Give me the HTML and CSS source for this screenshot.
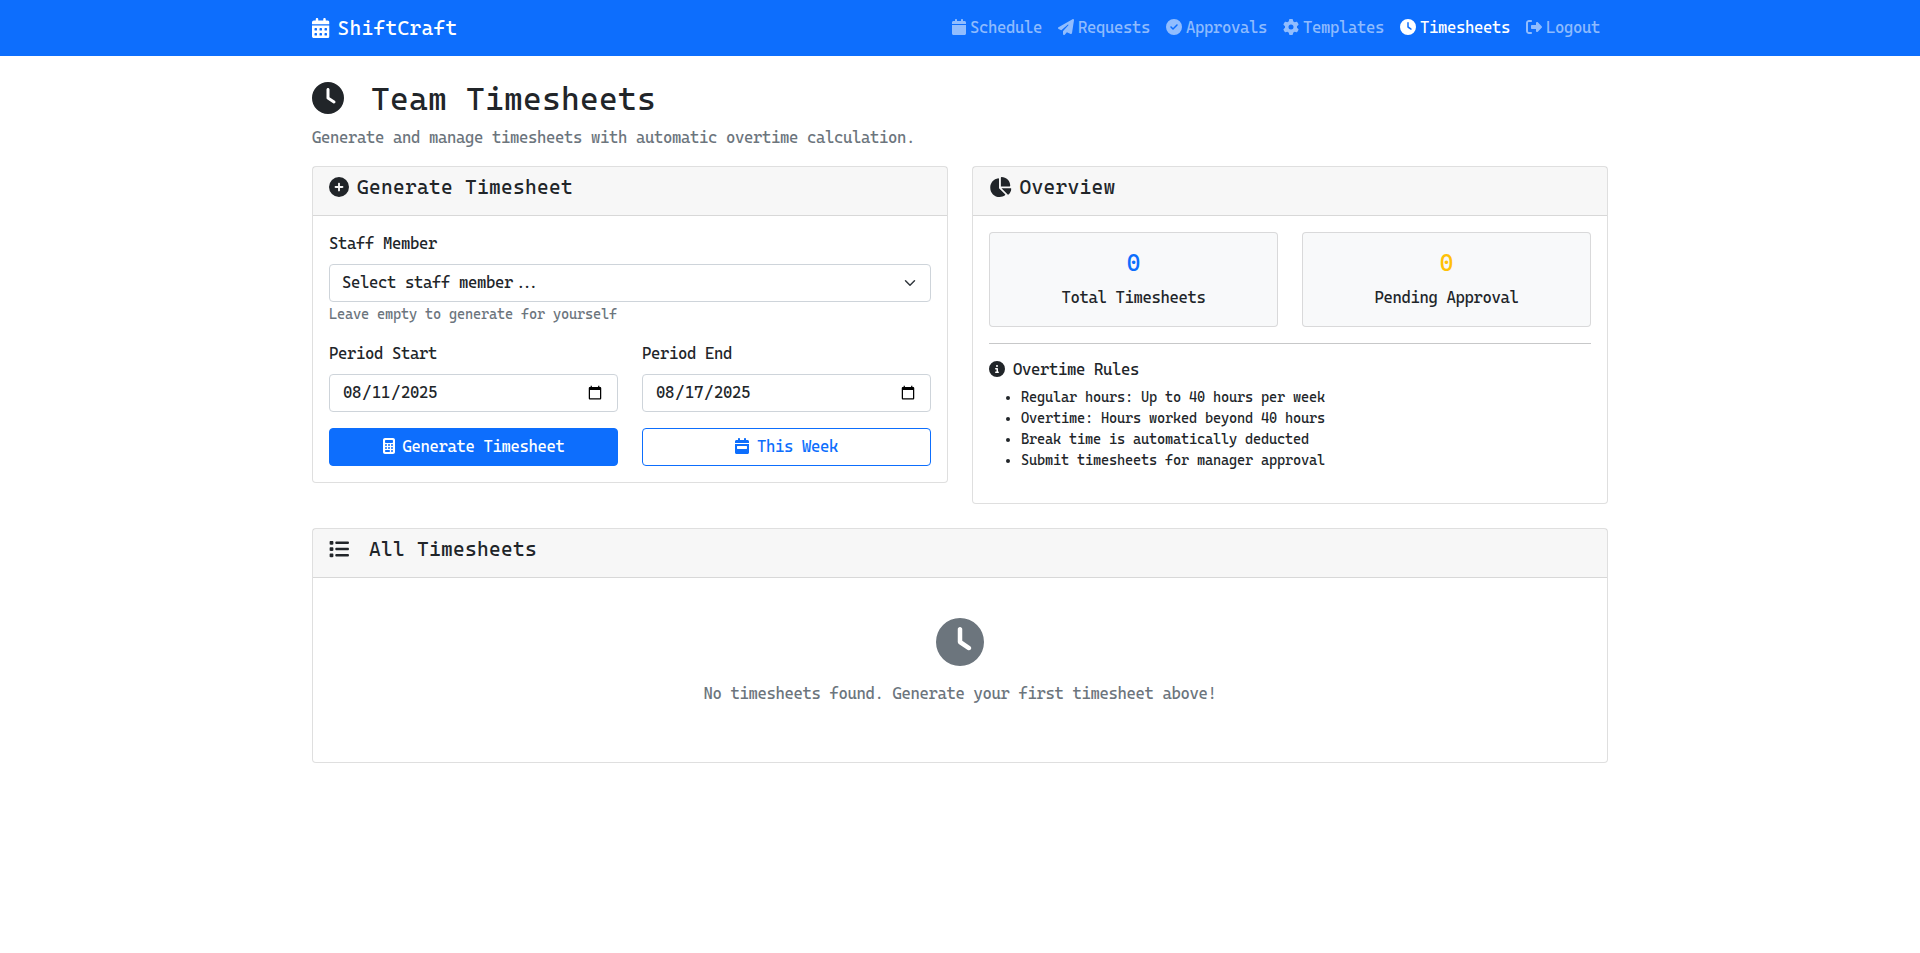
FILE: index.html
```html
<!DOCTYPE html>
<html lang="en">
<head>
    <meta charset="utf-8">
    <title>Team Timesheets - ShiftCraft</title>
    <link rel="stylesheet" href="styles.css">
</head>
<body>
    <svg class="sprite" xmlns="http://www.w3.org/2000/svg">
        <symbol id="i-calendar-days" viewBox="0 0 448 512"><path d="M128 0c17.7 0 32 14.3 32 32V64H288V32c0-17.7 14.3-32 32-32s32 14.3 32 32V64h48c26.5 0 48 21.5 48 48v48H0V112C0 85.5 21.5 64 48 64H96V32c0-17.7 14.3-32 32-32zM0 192H448V464c0 26.5-21.5 48-48 48H48c-26.5 0-48-21.5-48-48V192zm64 80v32c0 8.8 7.2 16 16 16h32c8.8 0 16-7.2 16-16V272c0-8.8-7.2-16-16-16H80c-8.8 0-16 7.2-16 16zm128 0v32c0 8.8 7.2 16 16 16h32c8.8 0 16-7.2 16-16V272c0-8.8-7.2-16-16-16H208c-8.8 0-16 7.2-16 16zm144-16c-8.8 0-16 7.2-16 16v32c0 8.8 7.2 16 16 16h32c8.8 0 16-7.2 16-16V272c0-8.8-7.2-16-16-16H336zM64 400v32c0 8.8 7.2 16 16 16h32c8.8 0 16-7.2 16-16V400c0-8.8-7.2-16-16-16H80c-8.8 0-16 7.2-16 16zm144-16c-8.8 0-16 7.2-16 16v32c0 8.8 7.2 16 16 16h32c8.8 0 16-7.2 16-16V400c0-8.8-7.2-16-16-16H208zm112 16v32c0 8.8 7.2 16 16 16h32c8.8 0 16-7.2 16-16V400c0-8.8-7.2-16-16-16H336c-8.8 0-16 7.2-16 16z"/></symbol>
        <symbol id="i-calendar" viewBox="0 0 448 512"><path d="M96 32V64H48C21.5 64 0 85.5 0 112v48H448V112c0-26.5-21.5-48-48-48H352V32c0-17.7-14.3-32-32-32s-32 14.3-32 32V64H160V32c0-17.7-14.3-32-32-32S96 14.3 96 32zM448 192H0V464c0 26.5 21.5 48 48 48H400c26.5 0 48-21.5 48-48V192z"/></symbol>
        <symbol id="i-plane" viewBox="0 0 512 512"><path d="M498.1 5.6c10.1 7 15.4 19.1 13.5 31.2l-64 416c-1.5 9.7-7.4 18.2-16 23s-18.9 5.4-28 1.6L284 427.7l-68.5 74.1c-8.9 9.7-22.9 12.9-35.2 8.1S160 493.2 160 480V396.4c0-4 1.5-7.8 4.2-10.7L331.8 202.8c5.8-6.3 5.6-16-.4-22s-15.7-6.4-22-.7L106 360.8 17.7 316.6C7.1 311.3 .3 300.7 0 288.9s5.9-22.8 16.1-28.7l448-256c10.7-6.1 23.9-5.5 34 1.4z"/></symbol>
        <symbol id="i-check" viewBox="0 0 512 512"><path d="M256 512A256 256 0 1 0 256 0a256 256 0 1 0 0 512zM369 209L241 337c-9.4 9.4-24.6 9.4-33.9 0l-64-64c-9.4-9.4-9.4-24.6 0-33.9s24.6-9.4 33.9 0l47 47L335 175c9.4-9.4 24.6-9.4 33.9 0s9.4 24.6 0 33.9z"/></symbol>
        <symbol id="i-gear" viewBox="0 0 512 512"><path d="M495.9 166.6c3.2 8.7 .5 18.4-6.4 24.6l-43.3 39.4c1.1 8.3 1.7 16.8 1.7 25.4s-.6 17.1-1.7 25.4l43.3 39.4c6.9 6.2 9.6 15.9 6.4 24.6c-4.4 11.9-9.7 23.3-15.8 34.3l-4.7 8.1c-6.6 11-14 21.4-22.1 31.2c-5.9 7.2-15.7 9.6-24.5 6.8l-55.7-17.7c-13.4 10.3-28.2 18.9-44 25.4l-12.5 57.1c-2 9.1-9 16.3-18.2 17.8c-13.8 2.3-28 3.5-42.5 3.5s-28.7-1.2-42.5-3.5c-9.2-1.5-16.2-8.7-18.2-17.8l-12.5-57.1c-15.8-6.5-30.6-15.1-44-25.4L83.1 425.9c-8.8 2.8-18.6 .3-24.5-6.8c-8.1-9.8-15.5-20.2-22.1-31.2l-4.7-8.1c-6.1-11-11.4-22.4-15.8-34.3c-3.2-8.7-.5-18.4 6.4-24.6l43.3-39.4C64.6 273.1 64 264.6 64 256s.6-17.1 1.7-25.4L22.4 191.2c-6.9-6.2-9.6-15.9-6.4-24.6c4.4-11.9 9.7-23.3 15.8-34.3l4.7-8.1c6.6-11 14-21.4 22.1-31.2c5.9-7.2 15.7-9.6 24.5-6.8l55.7 17.7c13.4-10.3 28.2-18.9 44-25.4l12.5-57.1c2-9.1 9-16.3 18.2-17.8C227.3 1.2 241.5 0 256 0s28.7 1.2 42.5 3.5c9.2 1.5 16.2 8.7 18.2 17.8l12.5 57.1c15.8 6.5 30.6 15.1 44 25.4l55.7-17.7c8.8-2.8 18.6-.3 24.5 6.8c8.1 9.8 15.5 20.2 22.1 31.2l4.7 8.1c6.1 11 11.4 22.4 15.8 34.3zM256 336a80 80 0 1 0 0-160 80 80 0 1 0 0 160z"/></symbol>
        <symbol id="i-clock" viewBox="0 0 512 512"><path d="M256 0a256 256 0 1 1 0 512A256 256 0 1 1 256 0zM232 120V256c0 8 4 15.5 10.7 20l96 64c11 7.4 25.9 4.4 33.3-6.7s4.4-25.9-6.7-33.3L280 243.2V120c0-13.3-10.7-24-24-24s-24 10.7-24 24z"/></symbol>
        <symbol id="i-logout" viewBox="0 0 512 512"><path d="M377.9 105.9L500.7 228.7c7.2 7.2 11.3 17.1 11.3 27.3s-4.1 20.1-11.3 27.3L377.9 406.1c-6.4 6.4-15 9.9-24 9.9c-18.7 0-33.9-15.2-33.9-33.9l0-62.1-128 0c-17.7 0-32-14.3-32-32l0-64c0-17.7 14.3-32 32-32l128 0 0-62.1c0-18.7 15.2-33.9 33.9-33.9c9 0 17.6 3.6 24 9.9zM160 96L96 96c-17.7 0-32 14.3-32 32l0 256c0 17.7 14.3 32 32 32l64 0c17.7 0 32 14.3 32 32s-14.3 32-32 32l-64 0c-53 0-96-43-96-96L0 128C0 75 43 32 96 32l64 0c17.7 0 32 14.3 32 32s-14.3 32-32 32z"/></symbol>
        <symbol id="i-plus" viewBox="0 0 512 512"><path d="M256 512A256 256 0 1 0 256 0a256 256 0 1 0 0 512zM232 344V280H168c-13.3 0-24-10.7-24-24s10.7-24 24-24h64V168c0-13.3 10.7-24 24-24s24 10.7 24 24v64h64c13.3 0 24 10.7 24 24s-10.7 24-24 24H280v64c0 13.3-10.7 24-24 24s-24-10.7-24-24z"/></symbol>
        <symbol id="i-pie" viewBox="0 0 576 512"><path d="M304 240V16.6c0-9 7-16.6 16-16.6C443.7 0 544 100.3 544 224c0 9-7.6 16-16.6 16H304zM32 272C32 150.7 122.1 50.3 239 34.3c9.2-1.3 17 6.1 17 15.4V288L412.5 444.5c6.7 6.7 6.2 17.7-1.5 23.1C371.8 495.6 323.8 512 272 512C139.5 512 32 404.6 32 272zm526.4 16c9.3 0 16.6 7.8 15.4 17c-7.7 55.9-34.6 105.6-73.9 142.3c-6 5.6-15.4 5.2-21.2-.7L320 288H558.4z"/></symbol>
        <symbol id="i-calculator" viewBox="0 0 384 512"><path d="M64 0C28.7 0 0 28.7 0 64V448c0 35.3 28.7 64 64 64H320c35.3 0 64-28.7 64-64V64c0-35.3-28.7-64-64-64H64zM96 64H288c17.7 0 32 14.3 32 32v32c0 17.7-14.3 32-32 32H96c-17.7 0-32-14.3-32-32V96c0-17.7 14.3-32 32-32zm32 160a32 32 0 1 1 -64 0 32 32 0 1 1 64 0zM96 352a32 32 0 1 1 0-64 32 32 0 1 1 0 64zM64 416c0-17.7 14.3-32 32-32h96c17.7 0 32 14.3 32 32s-14.3 32-32 32H96c-17.7 0-32-14.3-32-32zM192 256a32 32 0 1 1 0-64 32 32 0 1 1 0 64zm32 64a32 32 0 1 1 -64 0 32 32 0 1 1 64 0zm64-64a32 32 0 1 1 0-64 32 32 0 1 1 0 64zm32 64a32 32 0 1 1 -64 0 32 32 0 1 1 64 0zM288 448a32 32 0 1 1 0-64 32 32 0 1 1 0 64z"/></symbol>
        <symbol id="i-week" viewBox="0 0 448 512"><path d="M128 0c17.7 0 32 14.3 32 32V64H288V32c0-17.7 14.3-32 32-32s32 14.3 32 32V64h48c26.5 0 48 21.5 48 48v48H0V112C0 85.5 21.5 64 48 64H96V32c0-17.7 14.3-32 32-32zM0 192H448V464c0 26.5-21.5 48-48 48H48c-26.5 0-48-21.5-48-48V192zm80 64c-8.8 0-16 7.2-16 16v64c0 8.8 7.2 16 16 16H368c8.8 0 16-7.2 16-16V272c0-8.8-7.2-16-16-16H80z"/></symbol>
        <symbol id="i-info" viewBox="0 0 512 512"><path d="M256 512A256 256 0 1 0 256 0a256 256 0 1 0 0 512zM216 336h24V272H216c-13.3 0-24-10.7-24-24s10.7-24 24-24h48c13.3 0 24 10.7 24 24v88h8c13.3 0 24 10.7 24 24s-10.7 24-24 24H216c-13.3 0-24-10.7-24-24s10.7-24 24-24zm40-208a32 32 0 1 1 0 64 32 32 0 1 1 0-64z"/></symbol>
        <symbol id="i-list" viewBox="0 0 512 512"><path d="M40 48C26.7 48 16 58.7 16 72v48c0 13.3 10.7 24 24 24H88c13.3 0 24-10.7 24-24V72c0-13.3-10.7-24-24-24H40zM192 64c-17.7 0-32 14.3-32 32s14.3 32 32 32H480c17.7 0 32-14.3 32-32s-14.3-32-32-32H192zm0 160c-17.7 0-32 14.3-32 32s14.3 32 32 32H480c17.7 0 32-14.3 32-32s-14.3-32-32-32H192zm0 160c-17.7 0-32 14.3-32 32s14.3 32 32 32H480c17.7 0 32-14.3 32-32s-14.3-32-32-32H192zM16 232v48c0 13.3 10.7 24 24 24H88c13.3 0 24-10.7 24-24V232c0-13.3-10.7-24-24-24H40c-13.3 0-24 10.7-24 24zM40 368c-13.3 0-24 10.7-24 24v48c0 13.3 10.7 24 24 24H88c13.3 0 24-10.7 24-24V392c0-13.3-10.7-24-24-24H40z"/></symbol>
    </svg>

    <nav class="navbar">
        <div class="navbar-inner">
            <a class="brand" href="#"><svg class="icon me-2"><use href="#i-calendar-days"/></svg>ShiftCraft</a>
            <div class="nav-links">
                <a class="nav-link" href="#"><svg class="icon me-1"><use href="#i-calendar"/></svg>Schedule</a>
                <a class="nav-link" href="#"><svg class="icon icon-sq me-1"><use href="#i-plane"/></svg>Requests</a>
                <a class="nav-link" href="#"><svg class="icon icon-sq me-1"><use href="#i-check"/></svg>Approvals</a>
                <a class="nav-link" href="#"><svg class="icon icon-sq me-1"><use href="#i-gear"/></svg>Templates</a>
                <a class="nav-link active" href="#"><svg class="icon icon-sq me-1"><use href="#i-clock"/></svg>Timesheets</a>
                <a class="nav-link" href="#"><svg class="icon icon-sq me-1"><use href="#i-logout"/></svg>Logout</a>
            </div>
        </div>
    </nav>

    <main class="container">
        <h2 class="page-title"><svg class="icon icon-sq me-2"><use href="#i-clock"/></svg> Team Timesheets</h2>
        <p class="muted page-sub">Generate and manage timesheets with automatic overtime calculation.</p>

        <div class="row">
            <section class="card">
                <h5 class="card-header"><svg class="icon icon-sq me-2"><use href="#i-plus"/></svg>Generate Timesheet</h5>
                <form class="card-body">
                    <div class="field">
                        <label class="form-label" for="staff">Staff Member</label>
                        <select class="form-control form-select" id="staff">
                            <option>Select staff member...</option>
                        </select>
                        <small class="form-text">Leave empty to generate for yourself</small>
                    </div>
                    <div class="two-col">
                        <div class="field">
                            <label class="form-label" for="periodStart">Period Start</label>
                            <input class="form-control" type="date" id="periodStart" value="2025-08-11">
                        </div>
                        <div class="field">
                            <label class="form-label" for="periodEnd">Period End</label>
                            <input class="form-control" type="date" id="periodEnd" value="2025-08-17">
                        </div>
                    </div>
                    <div class="two-col">
                        <button class="btn btn-primary" type="button"><svg class="icon icon-calc me-2"><use href="#i-calculator"/></svg>Generate Timesheet</button>
                        <button class="btn btn-outline" type="button"><svg class="icon me-2"><use href="#i-week"/></svg>This Week</button>
                    </div>
                </form>
            </section>

            <section class="card">
                <h5 class="card-header"><svg class="icon icon-pie me-2"><use href="#i-pie"/></svg>Overview</h5>
                <div class="card-body">
                    <div class="two-col">
                        <div class="stat">
                            <h4 class="stat-num text-primary">0</h4>
                            <p class="stat-label">Total Timesheets</p>
                        </div>
                        <div class="stat">
                            <h4 class="stat-num text-warning">0</h4>
                            <p class="stat-label">Pending Approval</p>
                        </div>
                    </div>
                    <hr class="divider">
                    <h6 class="rules-title"><svg class="icon icon-sq me-2"><use href="#i-info"/></svg>Overtime Rules</h6>
                    <ul class="rules">
                        <li>Regular hours: Up to 40 hours per week</li>
                        <li>Overtime: Hours worked beyond 40 hours</li>
                        <li>Break time is automatically deducted</li>
                        <li>Submit timesheets for manager approval</li>
                    </ul>
                </div>
            </section>
        </div>

        <section class="card">
            <h5 class="card-header"><svg class="icon icon-sq me-2"><use href="#i-list"/></svg> All Timesheets</h5>
            <div class="card-body">
                <div class="empty">
                    <svg class="empty-icon"><use href="#i-clock"/></svg>
                    <p class="muted empty-text">No timesheets found. Generate your first timesheet above!</p>
                </div>
            </div>
        </section>
    </main>
</body>
</html>
```

FILE: styles.css
```css
* {
    box-sizing: border-box;
}

body {
    margin: 0;
    font-family: "Cascadia Code", "DejaVu Sans Mono", monospace;
    font-size: 16px;
    line-height: 1.5;
    letter-spacing: -0.375px;
    color: #212529;
    background-color: #fff;
}

.sprite {
    display: none;
}

a {
    text-decoration: none;
}

/* icons */
.icon {
    display: inline-block;
    width: 0.875em;
    height: 1em;
    vertical-align: -0.125em;
    fill: currentColor;
}

.icon-sq {
    width: 1em;
}

.icon-pie {
    width: 1.125em;
}

.icon-calc {
    width: 0.75em;
}

.me-1 {
    margin-right: 4px;
}

.me-2 {
    margin-right: 8px;
}

/* navbar */
.navbar {
    background-color: #0d6efd;
    padding: 8px 0;
}

.navbar-inner {
    width: 1320px;
    margin: 0 auto;
    padding: 0 12px;
    display: flex;
    align-items: center;
    justify-content: space-between;
}

.brand {
    color: #fff;
    font-size: 20px;
    letter-spacing: 0.28px;
}

.nav-links {
    display: flex;
}

.nav-link {
    color: rgba(255, 255, 255, 0.55);
    padding: 8px;
}

.nav-link.active {
    color: #fff;
}

/* page */
.container {
    width: 1320px;
    margin: 24px auto 0;
    padding: 0 12px;
}

.page-title {
    font-size: 32px;
    font-weight: 500;
    line-height: 1.2;
    letter-spacing: 0.25px;
    margin: 0 0 8px;
}

.muted {
    color: #6c757d;
}

.page-sub {
    margin: 0 0 16px;
}

.row {
    display: grid;
    grid-template-columns: 1fr 1fr;
    gap: 24px;
    align-items: start;
    margin-bottom: 24px;
}

.card {
    background-color: #fff;
    border: 1px solid rgba(0, 0, 0, 0.125);
    border-radius: 4px;
}

.card-header {
    margin: 0;
    padding: 8px 16px 16px;
    font-size: 20px;
    font-weight: 500;
    line-height: 1.2;
    letter-spacing: 0.28px;
    background-color: rgba(0, 0, 0, 0.03);
    border-bottom: 1px solid rgba(0, 0, 0, 0.125);
}

.card-body {
    display: block;
    padding: 16px;
}

/* form */
.field {
    margin-bottom: 16px;
}

.two-col {
    display: grid;
    grid-template-columns: 1fr 1fr;
    gap: 24px;
}

.form-label {
    display: block;
    margin-bottom: 8px;
}

.form-control {
    display: block;
    width: 100%;
    height: 38px;
    padding: 6px 12px;
    font-family: inherit;
    font-size: 16px;
    line-height: 1.5;
    letter-spacing: inherit;
    color: #212529;
    background-color: #fff;
    border: 1px solid #ced4da;
    border-radius: 4px;
}

.form-select {
    appearance: none;
    padding-right: 36px;
    font-feature-settings: "calt" 1;
    background-image: url("data:image/svg+xml,%3csvg xmlns='http://www.w3.org/2000/svg' viewBox='0 0 16 16'%3e%3cpath fill='none' stroke='%23343a40' stroke-linecap='round' stroke-linejoin='round' stroke-width='2' d='M2 5l6 6 6-6'/%3e%3c/svg%3e");
    background-repeat: no-repeat;
    background-position: right 12px center;
    background-size: 16px 12px;
}

.form-text {
    font-size: 14px;
    letter-spacing: -0.2px;
    color: #6c757d;
}

.btn {
    height: 38px;
    padding: 6px 12px;
    font-family: inherit;
    font-size: 16px;
    line-height: 1.5;
    letter-spacing: inherit;
    border: 1px solid #0d6efd;
    border-radius: 4px;
    cursor: pointer;
}

.btn-primary {
    color: #fff;
    background-color: #0d6efd;
}

.btn-outline {
    color: #0d6efd;
    background-color: #fff;
}

/* overview */
.stat {
    padding: 16px;
    text-align: center;
    background-color: #f8f9fa;
    border: 1px solid rgba(0, 0, 0, 0.125);
    border-radius: 4px;
}

.stat-num {
    margin: 0 0 8px;
    font-size: 24px;
    font-weight: 500;
    line-height: 1.2;
    letter-spacing: 0;
}

.stat-label {
    margin: 0;
}

.text-primary {
    color: #0d6efd;
}

.text-warning {
    color: #ffc107;
}

.divider {
    margin: 16px 0;
    border: 0;
    border-top: 1px solid rgba(33, 37, 41, 0.25);
}

.rules-title {
    margin: 0 0 8px;
    font-size: 16px;
    font-weight: 500;
    line-height: 1.2;
}

.rules {
    margin: 0 0 16px;
    padding-left: 32px;
    font-size: 14px;
    letter-spacing: -0.2px;
}

/* empty state */
.empty {
    padding: 24px 0;
    text-align: center;
}

.empty-icon {
    display: block;
    width: 48px;
    height: 48px;
    margin: 0 auto 16px;
    fill: #6c757d;
}

.empty-text {
    margin: 0 0 16px;
}
```
